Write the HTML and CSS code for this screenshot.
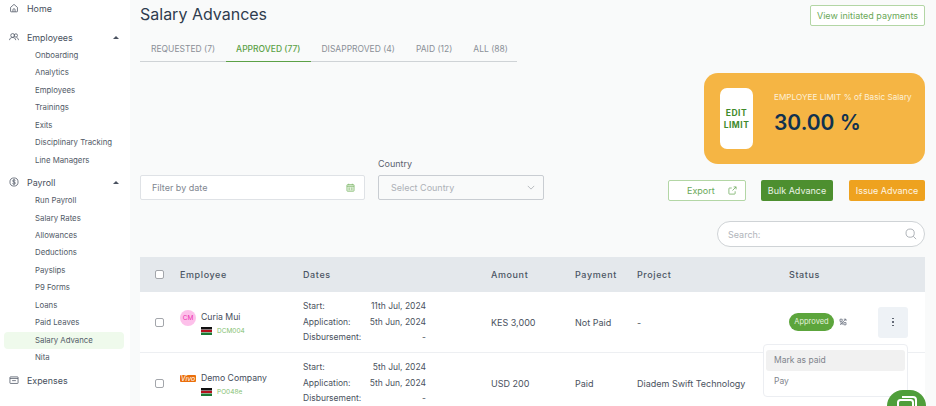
FILE: index.html

```html
<!doctype html>
<html lang="en">

<head>
  <meta charset="utf-8">
  <meta name="viewport" content="width=device-width, initial-scale=1.0">
  <title>Salary Advances</title>
  <link rel="stylesheet" href="styles.css">
</head>

<body>
  <div class="layout">
    <nav class="sidebar">
      <a class="nav-head nav-home">
        <svg class="nav-icon" viewBox="0 0 16 16"><path d="M2.500 7 8 2.200 13.500 7v6.300a.8.8 0 0 1-.8.8H3.300a.8.8 0 0 1-.8-.8z"/><path d="M6.300 14v-3.200a1.700 1.700 0 0 1 3.400 0V14"/></svg>
        Home
      </a>

      <a class="nav-head nav-employees">
        <svg class="nav-icon" viewBox="0 0 16 16"><circle cx="5.800" cy="5.500" r="3"/><circle cx="11" cy="5.500" r="2.600"/><path d="M.8 13c.4-2.800 2-4.200 5-4.200s4.600 1.400 5 4.200"/><path d="M12 8.900c1.800.3 2.900 1.700 3.200 4.100"/></svg>
        Employees
        <span class="caret"></span>
      </a>
      <div class="sub">
        <a>Onboarding</a>
        <a>Analytics</a>
        <a>Employees</a>
        <a>Trainings</a>
        <a>Exits</a>
        <a>Disciplinary Tracking</a>
        <a>Line Managers</a>
      </div>

      <a class="nav-head nav-payroll">
        <svg class="nav-icon" viewBox="0 0 16 16"><circle cx="8" cy="8" r="6.500"/><path d="M10.300 5.700C9.800 4.900 9 4.600 8 4.600c-1.300 0-2.200.6-2.200 1.700 0 2.300 4.500 1.100 4.500 3.400 0 1.100-1 1.700-2.300 1.700-1.100 0-2-.4-2.500-1.200M8 3.500v9"/></svg>
        Payroll
        <span class="caret"></span>
      </a>
      <div class="sub">
        <a>Run Payroll</a>
        <a>Salary Rates</a>
        <a>Allowances</a>
        <a>Deductions</a>
        <a>Payslips</a>
        <a>P9 Forms</a>
        <a>Loans</a>
        <a>Paid Leaves</a>
        <a class="active">Salary Advance</a>
        <a>Nita</a>
      </div>

      <a class="nav-head nav-expenses">
        <svg class="nav-icon" viewBox="0 0 16 16"><rect x="1.500" y="3" width="13" height="10.500" rx=".8"/><path d="M1.500 5.500h13M5 9h6"/></svg>
        Expenses
      </a>
    </nav>

    <main class="main">
      <div class="top-row">
        <h1>Salary Advances</h1>
        <button class="btn btn-outline btn-view">View initiated payments</button>
      </div>

      <div class="tabs">
        <a class="tab">REQUESTED (7)</a>
        <a class="tab tab-active">APPROVED (77)</a>
        <a class="tab">DISAPPROVED (4)</a>
        <a class="tab">PAID (12)</a>
        <a class="tab">ALL (88)</a>
      </div>

      <div class="limit-row">
        <div class="limit-card">
          <div class="edit-limit">EDIT<br>LIMIT</div>
          <div class="limit-info">
            <div class="limit-label">EMPLOYEE LIMIT % of Basic Salary</div>
            <div class="limit-value">30.00 %</div>
          </div>
        </div>
      </div>

      <div class="filter-row">
        <div class="field-date">
          <span>Filter by date</span>
          <svg class="cal-icon" viewBox="0 0 10 10"><rect x="1" y="1.800" width="8" height="7.400" rx=".8"/><path d="M1 3.700h8M3 .8v1.600M7 .8v1.600M3.500 5v3M6.500 5v3"/></svg>
        </div>
        <div class="field-country">
          <label>Country</label>
          <div class="select">
            <span>Select Country</span>
            <svg class="chevron" viewBox="0 0 10 6"><path d="M1 1l4 4 4-4"/></svg>
          </div>
        </div>
        <div class="actions">
          <button class="btn btn-outline btn-export">
            Export
            <svg viewBox="0 0 12 12"><path d="M9.500 7v3a.8.8 0 0 1-.8.8H2a.8.8 0 0 1-.8-.8V3.500A.8.8 0 0 1 2 2.700h3"/><path d="M7.500 1.200h3.300v3.300M10.800 1.200 6 6"/></svg>
          </button>
          <button class="btn btn-green">Bulk Advance</button>
          <button class="btn btn-orange">Issue Advance</button>
        </div>
      </div>

      <div class="search-row">
        <div class="search">
          <span>Search:</span>
          <svg viewBox="0 0 14 14"><circle cx="6" cy="6" r="4.800"/><path d="m9.600 9.600 3.400 3.400"/></svg>
        </div>
      </div>

      <div class="table">
        <div class="row row-header">
          <div><span class="checkbox"></span></div>
          <div>Employee</div>
          <div>Dates</div>
          <div>Amount</div>
          <div>Payment</div>
          <div>Project</div>
          <div>Status</div>
        </div>

        <div class="row row-body">
          <div><span class="checkbox"></span></div>
          <div class="employee">
            <span class="avatar">CM</span>
            <div class="emp-text">
              <div class="emp-name">Curia Mui</div>
              <div class="emp-meta">
                <svg class="flag" viewBox="0 0 11 8"><rect width="11" height="8" fill="#fff"/><rect width="11" height="2.500" fill="#111"/><rect y="2.900" width="11" height="2.200" fill="#b3121d"/><rect y="5.500" width="11" height="2.500" fill="#1a7a35"/></svg>
                <span class="emp-code">DCM004</span>
              </div>
            </div>
          </div>
          <div class="dates">
            <span>Start:</span><span>11th Jul, 2024</span>
            <span>Application:</span><span>5th Jun, 2024</span>
            <span>Disbursement:</span><span>-</span>
          </div>
          <div>KES 3,000</div>
          <div>Not Paid</div>
          <div>-</div>
          <div class="status">
            <span class="pill">Approved</span>
            <svg class="status-icon" viewBox="0 0 8 8"><path d="M1 1.200h2.200v2.200H1zM4.800 4.600H7v2.200H4.800zM6.800 1 1.200 7M4.800 1.200H7v1.800M1 5h2.200v1.800"/></svg>
            <button class="kebab"><i></i><i></i><i></i></button>
          </div>
        </div>

        <div class="row row-body">
          <div><span class="checkbox"></span></div>
          <div class="employee">
            <span class="logo">Vivo</span>
            <div class="emp-text">
              <div class="emp-name">Demo Company</div>
              <div class="emp-meta">
                <svg class="flag" viewBox="0 0 11 8"><rect width="11" height="8" fill="#fff"/><rect width="11" height="2.500" fill="#111"/><rect y="2.900" width="11" height="2.200" fill="#b3121d"/><rect y="5.500" width="11" height="2.500" fill="#1a7a35"/></svg>
                <span class="emp-code">PO048e</span>
              </div>
            </div>
          </div>
          <div class="dates">
            <span>Start:</span><span>5th Jul, 2024</span>
            <span>Application:</span><span>5th Jun, 2024</span>
            <span>Disbursement:</span><span>-</span>
          </div>
          <div>USD 200</div>
          <div>Paid</div>
          <div>Diadem Swift Technology</div>
          <div></div>
        </div>
      </div>
    </main>
  </div>

  <div class="menu">
    <a class="menu-on">Mark as paid</a>
    <a>Pay</a>
  </div>

  <div class="chat">
    <svg viewBox="0 0 24 24"><rect x="3" y="5" width="15" height="12" rx="2.500"/><path d="M7 2h11a3 3 0 0 1 3 3v8"/></svg>
  </div>
</body>
</html>
```

FILE: styles.css

```css
html, body {
  margin: 0;
  height: 406px;
  overflow: hidden;
}

body {
  position: relative;
  font-family: Inter, "Liberation Sans", sans-serif;
  font-size: 9px;
  color: #4a5260;
  background-color: #f9fafa;
}

button {
  font-family: inherit;
}

.layout {
  display: flex;
  align-items: flex-start;
  height: 406px;
  overflow: hidden;
}

/* Sidebar */
.sidebar {
  flex: none;
  box-sizing: border-box;
  width: 130px;
  height: 406px;
  overflow: hidden;
  background-color: #fff;
}

.nav-head {
  display: flex;
  align-items: center;
  height: 16px;
  padding-left: 9px;
  font-size: 8.900px;
  color: #474f5c;
}

.nav-home {
  margin-top: 0;
}

.nav-employees {
  margin-top: 13px;
}

.nav-payroll {
  margin-top: 5px;
}

.nav-expenses {
  margin-top: 6px;
}

.nav-icon {
  width: 10px;
  height: 10px;
  margin-right: 8px;
  fill: none;
  stroke: #4a5260;
  stroke-width: 1.200;
}

.caret {
  width: 0;
  height: 0;
  margin-left: auto;
  margin-right: 11px;
  border-left: 3px solid transparent;
  border-right: 3px solid transparent;
  border-bottom: 3px solid #4a5260;
}

.sub {
  margin-top: 2px;
  display: flex;
  flex-direction: column;
}

.sub a {
  display: block;
  height: 17.450px;
  line-height: 17.450px;
  margin: 0 6px 0 4px;
  padding-left: 31px;
  font-size: 7.800px;
  color: #525a67;
  border-radius: 4px;
}

.sub a.active {
  background-color: #effaec;
}

/* Main column */
.main {
  flex: 1;
  min-width: 0;
  padding: 0 11px 0 10px;
}

.top-row {
  display: flex;
  justify-content: space-between;
  align-items: flex-start;
  height: 37px;
}

h1 {
  margin: 3px 0 0;
  font-size: 16px;
  line-height: 22px;
  font-weight: 400;
  color: #2f3c4e;
}

.btn {
  box-sizing: border-box;
  height: 21px;
  padding: 0;
  border-radius: 2px;
  font-size: 9px;
  cursor: pointer;
}

.btn-outline {
  background-color: #fff;
  border: 1px solid #b3d6a5;
  color: #6aa858;
}

.btn-view {
  width: 115px;
  margin-top: 5px;
}

.tabs {
  display: flex;
  width: 377px;
  height: 24px;
  border-bottom: 1px solid #cfd3d6;
}

.tab {
  box-sizing: border-box;
  height: 25px;
  padding: 6px 10.500px 0;
  font-size: 8.500px;
  line-height: 12px;
  color: #8a8f97;
  white-space: nowrap;
}

.tab:first-child {
  margin-left: .5px;
}

.tab-active {
  color: #5ca146;
  font-weight: 500;
  border-bottom: 1px solid #5ca146;
}

.limit-row {
  display: flex;
  justify-content: flex-end;
  margin-top: 11px;
}

.limit-card {
  box-sizing: border-box;
  display: flex;
  align-items: center;
  width: 221px;
  height: 91px;
  padding-left: 16px;
  background-color: #f5b544;
  border-radius: 14px;
}

.edit-limit {
  display: flex;
  align-items: center;
  justify-content: center;
  width: 33px;
  height: 61px;
  background-color: #fff;
  border-radius: 7px;
  font-size: 8.500px;
  line-height: 12px;
  font-weight: 700;
  letter-spacing: .5px;
  text-align: center;
  color: #3f8a2c;
}

.limit-info {
  margin-left: 21px;
  padding-bottom: 11px;
}

.limit-label {
  font-size: 8.200px;
  color: #fdf0d8;
}

.limit-value {
  margin-top: 8px;
  font-size: 21px;
  font-weight: 600;
  color: #10314f;
}

.filter-row {
  display: flex;
  align-items: flex-end;
  height: 36px;
}

.field-date {
  box-sizing: border-box;
  display: flex;
  align-items: center;
  justify-content: space-between;
  width: 225px;
  height: 25px;
  padding: 0 9px 0 11px;
  background-color: #fff;
  border: 1px solid #dfe2e6;
  border-radius: 2px;
  color: #808690;
}

.cal-icon {
  width: 9px;
  height: 9px;
  fill: #e3f0dd;
  stroke: #7db86a;
  stroke-width: .8;
}

.field-country {
  margin-left: 13px;
}

.field-country label {
  display: block;
  margin-bottom: 6px;
  font-size: 9px;
  line-height: 11px;
  color: #5b6370;
}

.select {
  box-sizing: border-box;
  display: flex;
  align-items: center;
  justify-content: space-between;
  width: 166px;
  height: 25px;
  padding: 0 8px 0 12px;
  border: 1px solid #c9cdd2;
  border-radius: 2px;
  color: #adb1b7;
}

.chevron {
  width: 8px;
  height: 5px;
  fill: none;
  stroke: #a9adb3;
}

.actions {
  display: flex;
  flex: 1;
  justify-content: flex-end;
  margin-bottom: -1px;
}

.btn-export {
  display: flex;
  align-items: center;
  width: 78px;
  padding-left: 18px;
  margin-right: 15px;
}

.btn-export svg {
  width: 9px;
  height: 9px;
  margin-left: 13px;
  fill: none;
  stroke: #6aa858;
}

.btn-green {
  width: 72px;
  margin-right: 16px;
  background-color: #4d8f2f;
  border: none;
  color: #eaf3e5;
}

.btn-orange {
  width: 76px;
  background-color: #eea21f;
  border: none;
  color: #fdf4e2;
}

.search-row {
  display: flex;
  justify-content: flex-end;
  margin-top: 21px;
}

.search {
  box-sizing: border-box;
  display: flex;
  align-items: center;
  justify-content: space-between;
  width: 208px;
  height: 26px;
  padding: 0 7px 0 10px;
  background-color: #fff;
  border: 1px solid #cfd3d6;
  border-radius: 13px;
  color: #b0b4ba;
}

.search svg {
  width: 12px;
  height: 12px;
  fill: none;
  stroke: #a3a7ad;
}

/* Table */
.table {
  margin-top: 10px;
  background-color: #fff;
}

.row {
  display: grid;
  grid-template-columns: 40px 123px 188px 84px 62px 152px 1fr;
  align-items: center;
}

.row > div:first-child {
  display: flex;
  justify-content: center;
  padding-right: 1px;
}

.row-header {
  height: 35px;
  background-color: #e4e8ec;
  font-weight: 500;
  letter-spacing: .6px;
  color: #4b5563;
}

.row-body {
  box-sizing: border-box;
  height: 61px;
  border-bottom: 1px solid #edeff2;
}

.checkbox {
  box-sizing: border-box;
  display: block;
  width: 9px;
  height: 9px;
  background-color: #fff;
  border: 1px solid #a3a6ab;
  border-radius: 2px;
}

.employee {
  display: flex;
  align-items: flex-start;
}

.emp-text {
  margin-top: 2px;
}

.avatar {
  flex: none;
  display: flex;
  align-items: center;
  justify-content: center;
  width: 16px;
  height: 16px;
  margin: 0 5px 0 0;
  border-radius: 50%;
  background-color: #fdc0ea;
  font-size: 6.500px;
  color: #ec34b0;
}

.logo {
  flex: none;
  width: 16px;
  height: 7px;
  margin: 4px 5px 0 0;
  background-color: #ea6f0c;
  border-radius: 1px;
  font-size: 7px;
  line-height: 7px;
  font-style: italic;
  text-align: center;
  color: #fff;
}

.emp-name {
  font-size: 8.700px;
  line-height: 11px;
  color: #454d5a;
  white-space: nowrap;
}

.emp-meta {
  display: flex;
  align-items: center;
  margin-top: 4px;
}

.flag {
  width: 11px;
  height: 8px;
  margin-right: 5px;
}

.emp-code {
  font-size: 6.500px;
  color: #86bf73;
}

.dates {
  display: grid;
  grid-template-columns: auto auto;
  justify-content: space-between;
  width: 123px;
  row-gap: 5px;
  font-size: 8.500px;
  line-height: 10.500px;
}

.dates span:nth-child(even) {
  text-align: right;
}

.status {
  position: relative;
  display: flex;
  align-items: center;
}

.pill {
  width: 45px;
  height: 18px;
  background-color: #5ca53c;
  border-radius: 9px;
  font-size: 7.500px;
  line-height: 18px;
  text-align: center;
  color: #e5f2de;
}

.status-icon {
  width: 8px;
  height: 8px;
  margin-left: 5px;
  fill: none;
  stroke: #6b7280;
  stroke-width: .8;
}

.kebab {
  display: flex;
  flex-direction: column;
  align-items: center;
  justify-content: center;
  gap: 2px;
  width: 30px;
  height: 31px;
  margin-left: 31px;
  padding: 0;
  background-color: #eef2f6;
  border: none;
  border-radius: 3px;
}

.kebab i {
  width: 1.500px;
  height: 1.500px;
  background-color: #4a5260;
  border-radius: 50%;
}

/* Things lying over the table */
.menu {
  position: absolute;
  left: 763px;
  top: 344px;
  box-sizing: border-box;
  width: 145px;
  height: 53px;
  padding: 5px 2px;
  background-color: #fff;
  border: 1px solid #eceef2;
  border-radius: 4px;
  color: #7f848c;
  font-size: 8.500px;
}

.menu a {
  display: block;
  height: 21px;
  line-height: 21px;
  padding-left: 8px;
  border-radius: 3px;
}

.menu a.menu-on {
  background-color: #f1f1f1;
}

.chat {
  position: absolute;
  left: 887px;
  top: 390px;
  display: flex;
  justify-content: center;
  width: 39px;
  height: 16px;
  padding-top: 5px;
  box-sizing: border-box;
  overflow: hidden;
  background-color: #4f9e3a;
  border-radius: 19.500px 19.500px 0 0;
}

.chat svg {
  flex: none;
  width: 24px;
  height: 24px;
  fill: none;
  stroke: #fff;
  stroke-width: 2;
}
```
